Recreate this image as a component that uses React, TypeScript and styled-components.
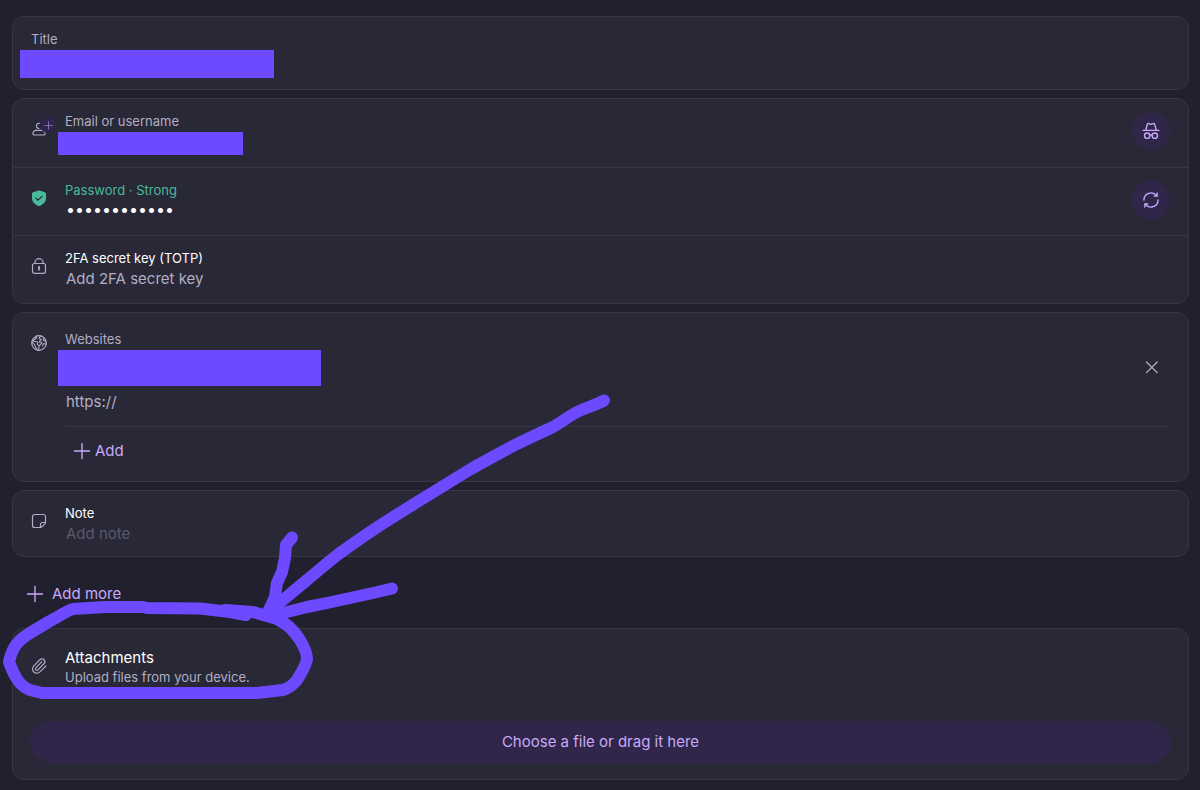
import React from "react";
import styled, { createGlobalStyle } from "styled-components";

const color = {
  page: "#21202e",
  card: "#292837",
  border: "#373647",
  text: "#ffffff",
  weak: "#b1aec4",
  hint: "#5a586a",
  accent: "#c9a9fb",
  accentFill: "#2f2649",
  success: "#4ab89a",
  marker: "#6d4aff",
};

const GlobalStyle = createGlobalStyle`
  *, *::before, *::after { box-sizing: border-box; }
  body {
    margin: 0;
    background: ${color.page};
    color: ${color.text};
    font-family: Inter, "Liberation Sans", sans-serif;
  }
  button, input { font-family: inherit; }
`;

const Page = styled.main`
  position: relative;
  display: flex;
  flex-direction: column;
  gap: 8px;
  padding: 16px 11px 10px 12px;
`;

const Card = styled.section`
  display: flex;
  flex-direction: column;
  background: ${color.card};
  border: 1px solid ${color.border};
  border-radius: 12px;
`;

const Row = styled.div<{ $compact?: boolean }>`
  display: flex;
  align-items: flex-start;
  gap: 18px;
  min-height: ${(p) => (p.$compact ? 65 : 68)}px;
  padding: 13px 18px 10px;
  & + & {
    border-top: 1px solid ${color.border};
  }
`;

const TitleBody = styled.div`
  display: flex;
  flex-direction: column;
  padding: 13px 18px 11px;
`;

const WebsitesBody = styled(Row)`
  padding-top: 17px;
`;

const IconSlot = styled.span<{ $drop?: number }>`
  position: relative;
  display: flex;
  flex: none;
  width: 16px;
  height: 18px;
  margin-top: ${(p) => p.$drop ?? 8}px;
  align-items: center;
  color: ${color.weak};
`;

const PlusBadge = styled.span`
  position: absolute;
  top: -3px;
  left: 9px;
  display: flex;
  align-items: center;
  justify-content: center;
  width: 16px;
  height: 16px;
  border-radius: 50%;
  background: ${color.accentFill};
  color: #a98ae0;
`;

const Field = styled.div`
  display: flex;
  flex: 1;
  min-width: 0;
  flex-direction: column;
`;

const Label = styled.label<{ $tone?: "weak" | "text" | "success" }>`
  font-size: 13px;
  line-height: 18px;
  color: ${(p) => color[p.$tone ?? "weak"]};
`;

const TextInput = styled.input<{ $hint?: string }>`
  width: 100%;
  height: 24px;
  padding: 0 1px;
  border: 0;
  outline: 0;
  background: none;
  color: ${color.text};
  font-size: 15px;
  line-height: 24px;
  &::placeholder {
    color: ${(p) => p.$hint ?? color.weak};
    opacity: 1;
  }
`;

const PasswordInput = styled(TextInput)`
  height: 20px;
  font-size: 16px;
  line-height: 20px;
`;

const ConcealedInput = styled.input<{ $width: number; $height: number; $outset: number }>`
  flex: none;
  width: ${(p) => p.$width}px;
  max-width: 100%;
  height: ${(p) => p.$height}px;
  margin: 2px 0 0 -${(p) => p.$outset}px;
  padding: 0;
  border: 0;
  outline: 0;
  background: ${color.marker};
`;

const RoundButton = styled.button<{ $plain?: boolean }>`
  display: flex;
  flex: none;
  align-items: center;
  justify-content: center;
  width: 38px;
  height: 38px;
  padding: 0;
  border: 0;
  border-radius: 50%;
  background: ${(p) => (p.$plain ? "none" : color.accentFill)};
  color: ${(p) => (p.$plain ? color.weak : color.accent)};
`;

const SiteRow = styled.div`
  display: flex;
  align-items: flex-end;
  justify-content: space-between;
`;

const NewSite = styled.div`
  padding: 4px 0 12px;
  border-bottom: 1px solid ${color.border};
`;

const AddButton = styled.button<{ $wide?: boolean }>`
  display: flex;
  align-self: flex-start;
  align-items: center;
  gap: ${(p) => (p.$wide ? 8 : 4)}px;
  height: 40px;
  margin: ${(p) => (p.$wide ? "9px 0 6px" : "4px 0 0")};
  padding: 0 ${(p) => (p.$wide ? 14 : 8)}px;
  border: 0;
  background: none;
  color: ${color.accent};
  font-size: 15px;
  line-height: 20px;
`;

const AttachmentsBody = styled.div`
  display: flex;
  flex-direction: column;
  gap: 36px;
  padding: 18px 17px 16px;
`;

const AttachmentsHead = styled.div`
  display: flex;
  align-items: center;
  gap: 18px;
  padding-left: 1px;
`;

const AttachmentsTitle = styled.h2`
  margin: 0;
  font-size: 15px;
  font-weight: 400;
  line-height: 22px;
`;

const AttachmentsHelp = styled.p`
  margin: 0;
  font-size: 13px;
  line-height: 16px;
  color: ${color.weak};
`;

const UploadButton = styled.button`
  height: 42px;
  border: 0;
  border-radius: 21px;
  background: ${color.accentFill};
  color: ${color.accent};
  font-size: 15px;
  line-height: 20px;
`;

const Annotation = styled.svg`
  position: absolute;
  top: 0;
  left: 0;
  pointer-events: none;
`;

type IconProps = { size?: number; children: React.ReactNode };

const Icon = ({ size = 16, children }: IconProps) => (
  <svg
    width={size}
    height={size}
    viewBox="0 0 16 16"
    fill="none"
    stroke="currentColor"
    strokeWidth="1.2"
    strokeLinecap="round"
    strokeLinejoin="round"
    aria-hidden="true"
  >
    {children}
  </svg>
);

const UserIcon = () => (
  <Icon>
    <path d="M8.300 2.300C6.600 2.100 5.500 3.200 5.500 4.800c0 1.500.9 2.600 2.400 2.700" />
    <path d="M4.900 9.300h6.200c1.500 0 3 2 3 3.300 0 .8-.6 1.400-1.400 1.400H3.300c-.8 0-1.400-.6-1.400-1.400 0-1.300 1.500-3.300 3-3.300Z" />
  </Icon>
);

const PlusIcon = ({ size = 18 }: { size?: number }) => (
  <Icon size={size}>
    <path d="M8 1.300v13.400M1.300 8h13.400" />
  </Icon>
);

const ShieldIcon = () => (
  <Icon>
    <path
      d="M8 .5c.4 0 .8.1 1.200.2l4.600 1.500c.7.2 1.200.9 1.200 1.600v4.700c0 3.600-3.200 6-5.900 7.200-.7.3-1.500.3-2.200 0C4.200 14.500 1 12.100 1 8.500V3.800c0-.7.5-1.400 1.200-1.600L6.800.7C7.200.6 7.600.5 8 .5Z"
      fill={color.success}
      stroke="none"
    />
    <path d="m5 8.200 2.100 2 3.900-3.900" stroke={color.card} />
  </Icon>
);

const LockIcon = () => (
  <Icon>
    <rect x="1.500" y="5.500" width="13" height="9.800" rx="2" />
    <path d="M3.900 5.300V4.800a4.100 4.100 0 0 1 8.200 0v.5" />
    <path d="M8 9v3.400" strokeWidth="1.700" strokeLinecap="butt" />
    <circle cx="8" cy="9" r="1" fill="currentColor" stroke="none" />
  </Icon>
);

const EarthIcon = () => (
  <Icon>
    <circle cx="8" cy="8" r="7.300" />
    <path d="M5.200 1.300 5.700 3 3 4.700c-.9.6-.7 1.400 0 1.500l2.800.5c.8.1 1 .6.9 1.200l-.3 1c-.1.500.2.800.6 1l1.200.5-.6 4.800M1 6.800l2.100 2.300c.8.8 1 1.600 1.300 2.600l1.900 3.300" strokeWidth="1.100" />
    <path d="M9.600.9 8.300 2.800c-.3.500 0 .9.500 1l.8.2c.6.2.6.7.300 1L8.500 6.300c-.4.500 0 .9.500.9h1.200c.5 0 .9.400.6.900l-2.200 2.200M13.500 3.100l-1.200 1.300c-.3.500-.1 1 .4 1.200l2.300.8M15.100 9.300l-1.700-.6c-.6-.2-1.100.1-1.300.7l-.6 1.800" strokeWidth="1.100" />
  </Icon>
);

const NoteIcon = () => (
  <Icon>
    <path d="M14.500 9.500V3.500a2 2 0 0 0-2-2h-9a2 2 0 0 0-2 2v9a2 2 0 0 0 2 2h6Z" stroke="none" />
    <path d="M14.500 9.500V3.500a2 2 0 0 0-2-2h-9a2 2 0 0 0-2 2v9a2 2 0 0 0 2 2h6" />
    <path d="M14.500 9.500h-3a2 2 0 0 0-2 2v3c.6 0 1-.2 1.400-.6l3-3c.4-.4.600-.8.600-1.400Z" />
  </Icon>
);

const ClipIcon = () => (
  <Icon>
    <path
      d="m16 6-8.414 8.586a2 2 0 0 0 2.829 2.829l8.414-8.586a4 4 0 1 0-5.657-5.657l-8.379 8.551a6 6 0 1 0 8.485 8.485l8.379-8.551"
      transform="translate(-.6 -.6) scale(.72)"
      strokeWidth="1.600"
    />
  </Icon>
);

const IncognitoIcon = () => (
  <Icon size={18}>
    <path d="M1 7.500h14M3.300 7.300l1.300-5c.2-.8 1-1.200 1.700-.9l1 .4c.4.200.9.200 1.400 0l1-.4c.7-.3 1.500.1 1.700.9l1.300 5" />
    <circle cx="4.600" cy="12.200" r="2.400" />
    <circle cx="11.400" cy="12.200" r="2.400" />
    <path d="M7 11.700c.5-.5 1.500-.5 2 0" />
  </Icon>
);

const RotateIcon = () => (
  <Icon size={18}>
    <path d="M1.700 8A6.300 6.300 0 0 1 13 4.200M14.300 8A6.300 6.300 0 0 1 3 11.800" />
    <path d="M13.500 1.800v2.700h-2.700M2.500 14.200v-2.700h2.700" />
  </Icon>
);

const CrossIcon = () => (
  <Icon size={18}>
    <path d="m4 3.500 9.500 9.500M13.500 3.500 4 13" />
  </Icon>
);

const HandDrawnArrow = () => (
  <Annotation
    width="640"
    height="720"
    viewBox="0 0 640 720"
    fill="none"
    stroke={color.marker}
    strokeWidth="12"
    strokeLinecap="round"
    strokeLinejoin="round"
    aria-hidden="true"
  >
    <path d="M604 400.500C596 405 585 408 577 412C569 416 562 422 553 427C540 433 527 439 513 446C498 454 485 461 470 469.500L427 496C412 505 398 514 383 523.500C368 533 354 543 340 553C328 562 318 571 307 580L277 605L268 613" />
    <path d="M292 537.500L286 545L285 558L282 572L277 583L275 597L268 612" />
    <path d="M392 588.500L373 593L350 598L327 603L307 607L283 613L268 614" />
    <path d="M246 615L230 612L200 608.500L147 608L143 607H105L73 609C66 611 58 617 50 621L30 633C22 638 17 642 14 648C11 653 10 657 9 662C11 667 13 673 17 679C20 684 25 688 30 690L42 693H257L283 690C289 688 294 684 297 680C301 673 306 666 307 659C307 653 303 645 300 640C296 634 292 629 287 625L277 619L253 612L225 610" />
  </Annotation>
);

export default function App() {
  return (
    <>
      <GlobalStyle />
      <Page>
        <Card>
          <TitleBody>
            <Label htmlFor="title">Title</Label>
            <ConcealedInput id="title" $width={254} $height={28} $outset={11} />
          </TitleBody>
        </Card>

        <Card>
          <Row>
            <IconSlot>
              <UserIcon />
              <PlusBadge>
                <PlusIcon size={9} />
              </PlusBadge>
            </IconSlot>
            <Field>
              <Label htmlFor="username">Email or username</Label>
              <ConcealedInput id="username" $width={185} $height={23} $outset={7} />
            </Field>
            <RoundButton type="button" aria-label="Hide my email">
              <IncognitoIcon />
            </RoundButton>
          </Row>
          <Row>
            <IconSlot>
              <ShieldIcon />
            </IconSlot>
            <Field>
              <Label htmlFor="password" $tone="success">
                Password · Strong
              </Label>
              <PasswordInput id="password" type="password" defaultValue="abcdefghijkl" />
            </Field>
            <RoundButton type="button" aria-label="Generate password">
              <RotateIcon />
            </RoundButton>
          </Row>
          <Row>
            <IconSlot>
              <LockIcon />
            </IconSlot>
            <Field>
              <Label htmlFor="totp" $tone="text">
                2FA secret key (TOTP)
              </Label>
              <TextInput id="totp" placeholder="Add 2FA secret key" />
            </Field>
          </Row>
        </Card>

        <Card>
          <WebsitesBody>
            <IconSlot $drop={4}>
              <EarthIcon />
            </IconSlot>
            <Field>
              <Label htmlFor="website">Websites</Label>
              <SiteRow>
                <ConcealedInput id="website" $width={263} $height={36} $outset={7} />
                <RoundButton type="button" $plain aria-label="Remove website">
                  <CrossIcon />
                </RoundButton>
              </SiteRow>
              <NewSite>
                <TextInput aria-label="New website" placeholder="https://" />
              </NewSite>
              <AddButton type="button">
                <PlusIcon />
                Add
              </AddButton>
            </Field>
          </WebsitesBody>
        </Card>

        <Card>
          <Row $compact>
            <IconSlot>
              <NoteIcon />
            </IconSlot>
            <Field>
              <Label htmlFor="note" $tone="text">
                Note
              </Label>
              <TextInput id="note" placeholder="Add note" $hint={color.hint} />
            </Field>
          </Row>
        </Card>

        <AddButton type="button" $wide>
          <PlusIcon />
          Add more
        </AddButton>

        <Card>
          <AttachmentsBody>
            <AttachmentsHead>
              <IconSlot $drop={0}>
                <ClipIcon />
              </IconSlot>
              <div>
                <AttachmentsTitle>Attachments</AttachmentsTitle>
                <AttachmentsHelp>Upload files from your device.</AttachmentsHelp>
              </div>
            </AttachmentsHead>
            <UploadButton type="button">Choose a file or drag it here</UploadButton>
          </AttachmentsBody>
        </Card>

        <HandDrawnArrow />
      </Page>
    </>
  );
}
